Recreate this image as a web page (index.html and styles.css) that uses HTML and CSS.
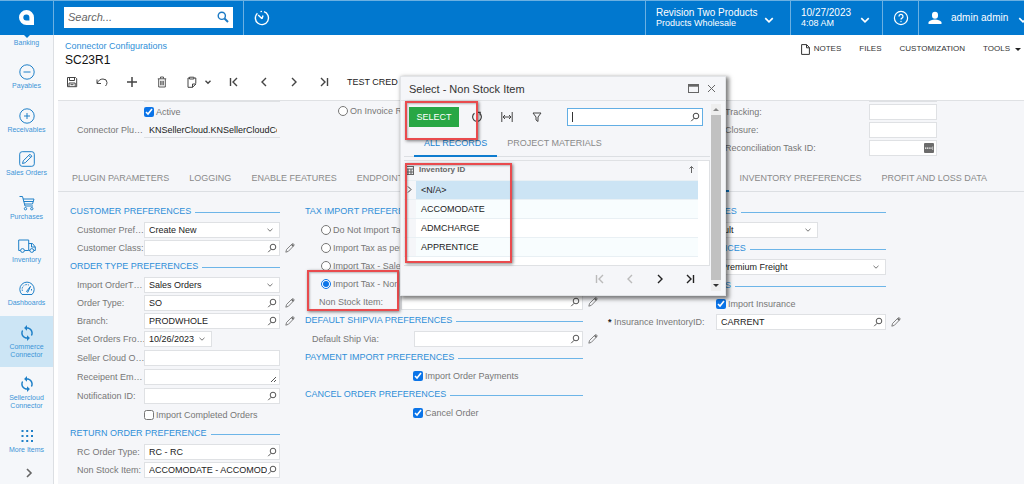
FILE: index.html
```html
<!DOCTYPE html>
<html lang="en">
<head>
<meta charset="utf-8">
<title>Connector Configurations - SC23R1</title>
<link rel="stylesheet" href="styles.css">
</head>
<body>
<svg class="defs" aria-hidden="true">
  <symbol id="lens" viewBox="0 0 10 10"><circle cx="6" cy="4" r="2.8"/><path d="M4.2 6.2 1.2 9.2"/></symbol>
  <symbol id="pencil" viewBox="0 0 10 10"><path d="M.8 9.2l.8-2.8L7 1q1-.7 1.7 0t0 1.8L3.4 8.3z" stroke-width=".8"/><path d="M6.8 1.600l1.600 1.600" stroke-width="1.500"/></symbol>
  <symbol id="down" viewBox="0 0 8 8"><path d="M1.5 2.8 4 5.2 6.5 2.8"/></symbol>
  <symbol id="prev" viewBox="0 0 12 12"><path d="M8 2 4 6l4 4"/></symbol>
  <symbol id="next" viewBox="0 0 12 12"><path d="M4 2l4 4-4 4"/></symbol>
  <symbol id="first" viewBox="0 0 12 12"><path d="M2.5 2v8M9 2 5 6l4 4"/></symbol>
  <symbol id="last" viewBox="0 0 12 12"><path d="M9.500 2v8M3 2l4 4-4 4"/></symbol>
  <symbol id="sync" viewBox="1 1 22 22"><path fill="currentColor" stroke="none" d="M12 4V1L8 5l4 4V6c3.310 0 6 2.690 6 6 0 1.010-.25 1.970-.7 2.800l1.460 1.460C19.540 15.030 20 13.570 20 12c0-4.420-3.580-8-8-8zm0 14c-3.310 0-6-2.690-6-6 0-1.010.25-1.970.7-2.800L5.240 7.740C4.460 8.970 4 10.430 4 12c0 4.420 3.580 8 8 8v3l4-4-4-4v3z"/></symbol>
</svg>
<div class="app">
  <header class="topbar">
    <div class="cell logo"><svg width="17" height="17" viewBox="0 0 17 17"><path d="M8.500 1A7.500 7.500 0 1 0 8.500 16H16V8.500A7.500 7.500 0 0 0 8.500 1z" fill="#fff"/><path d="M8.300 5.500a3 3 0 1 0 0 6H11.400V8.500a3 3 0 0 0-3.100-3z" fill="#0178cf"/></svg></div>
    <div class="cell search-cell">
      <div class="search"><input type="text" placeholder="Search..." aria-label="Search"><svg width="12" height="12" viewBox="0 0 12 12"><circle cx="4.800" cy="4.800" r="3.600"/><path d="M7.500 7.500 11 11" stroke-width="2"/></svg></div>
    </div>
    <button class="cell square" aria-label="Recent"><svg width="16" height="16" viewBox="0 0 16 16"><path d="M3.400 3.200A6.600 6.600 0 1 0 10 1.700M8 8.800 4.200 5M8 8.800l1-3.300M6.500 1.600 8 1.400M11.800 2.600l1 .9" stroke-width="1.400"/></svg></button>
    <div class="spacer"></div>
    <button class="cell company"><span class="stack"><span class="big">Revision Two Products</span><span>Products Wholesale</span></span><svg class="chev" width="12" height="12"><use href="#down"/></svg></button>
    <button class="cell date"><span class="stack"><span class="big">10/27/2023</span><span>4:08 AM</span></span><svg class="chev" width="12" height="12"><use href="#down"/></svg></button>
    <button class="cell square" aria-label="Help"><svg width="16" height="16" viewBox="0 0 16 16"><circle cx="8" cy="8" r="6.600"/><path d="M6 6.500a2 2 0 1 1 3 1.600Q8 8.600 8 9.600" stroke-width="1.300"/><circle cx="8" cy="11.500" r=".5" stroke-width=".6"/></svg></button>
    <button class="cell user"><svg width="14" height="14" viewBox="0 0 14 14"><path d="M7 .8a3 3 0 0 1 3 3v1a3 3 0 0 1-6 0v-1a3 3 0 0 1 3-3zM.5 13v-2Q2.500 8.500 7 8.500t6.500 2.500v2z" fill="#fff" stroke="none"/></svg><span class="big">admin admin</span><svg class="chev" width="12" height="12"><use href="#down"/></svg></button>
  </header>

  <div class="body">
    <nav class="side" aria-label="Modules">
      <a class="mod head" href="#"><i class="caret"></i><span>Banking</span></a>
      <a class="mod" href="#"><svg width="16" height="16" viewBox="0 0 16 16"><circle cx="8" cy="8" r="7.200"/><path d="M4.500 8h7"/></svg><span>Payables</span></a>
      <a class="mod" href="#"><svg width="16" height="16" viewBox="0 0 16 16"><circle cx="8" cy="8" r="7.200"/><path d="M5 8h6M8 5v6"/></svg><span>Receivables</span></a>
      <a class="mod" href="#"><svg width="16" height="16" viewBox="0 0 16 16"><rect x=".7" y=".7" width="14.600" height="14.600" rx="2.500"/><path d="M3.500 12.500l.8-2.700 6.600-6.600 2 2-6.600 6.500zM9.800 4.400l1.900 1.900"/></svg><span>Sales Orders</span></a>
      <a class="mod" href="#"><svg width="16" height="16" viewBox="0 0 16 16"><path d="M.5 1.500h3L6 11h8M4 4h11l-1.500 5H5.500M4.700 6.500h9.600"/><circle cx="6.500" cy="13.700" r="1.200"/><circle cx="12.800" cy="13.700" r="1.200"/></svg><span>Purchases</span></a>
      <a class="mod" href="#"><svg width="18" height="16" viewBox="0 0 18 16"><path d="M2.500 12.500H.7V2h10v10.500H6.500M10.700 5.500h3.800l2.800 3.500v3.500h-1.500M11 12.500h1M13.500 5.500V9h3.800"/><circle cx="4.500" cy="12.500" r="1.900"/><circle cx="13.800" cy="12.500" r="1.900"/></svg><span>Inventory</span></a>
      <a class="mod" href="#"><svg width="16" height="16" viewBox="0 0 16 16"><path d="M3 13.500A7.200 7.200 0 1 1 13 13.500zM7.500 10.500l4-5.200-2.700 6z"/><path d="M3.500 10A4.600 4.600 0 0 1 10 4.200M12.500 8v2.500" stroke-dasharray="1.500 1"/></svg><span>Dashboards</span></a>
      <a class="mod active" href="#"><svg width="16" height="16"><use href="#sync"/></svg><span>Commerce Connector</span></a>
      <a class="mod" href="#"><svg width="16" height="16"><use href="#sync"/></svg><span>Sellercloud Connector</span></a>
      <a class="mod" href="#"><svg width="16" height="16" viewBox="0 0 16 16"><path d="M2.500 3h2M7.200 3h2M12 3h2M2.500 8h2M7.200 8h2M12 8h2M2.500 13h2M7.200 13h2M12 13h2" stroke-width="2"/></svg><span>More Items</span></a>
      <button class="expand" aria-label="Expand"><svg width="12" height="12"><use href="#next"/></svg></button>
    </nav>

    <main class="main">
      <div class="title">
        <div><a class="crumb" href="#">Connector Configurations</a><h1>SC23R1</h1></div>
        <div class="links">
          <button class="notes"><svg width="9" height="11" viewBox="0 0 9 11"><path d="M.6.6h5L8.400 3.500v6.900H.6z"/><path d="M5.500.8v3h3"/></svg>NOTES</button>
          <button>FILES</button><button>CUSTOMIZATION</button><button class="tools">TOOLS<i class="tri"></i></button>
        </div>
      </div>
      <div class="toolbar">
        <button aria-label="Save"><svg width="12" height="12" viewBox="0 0 12 12"><path d="M1.500 1.500h8l1.200 1.200v8H1.500zM3.500 1.500v3h5v-3M3 10.500V7h6.200v3.500M4.500 8.700h3"/></svg></button>
        <button aria-label="Undo"><svg width="12" height="12" viewBox="0 0 12 12"><path d="M1 3.500v4h4M1.300 7.200Q3 3 7 3t4 3.500q0 2-1.500 3.500"/></svg></button>
        <button aria-label="Add"><svg width="12" height="12" viewBox="0 0 12 12"><path d="M6 1v10M1 6h10" stroke-width="1.500"/></svg></button>
        <button aria-label="Delete"><svg width="12" height="12" viewBox="0 0 12 12"><path d="M1.800 2.800h8.400M4.500 2.500V1h3v1.500M2.700 3v8h6.600V3M4.700 4.800v4.500M6 4.800v4.500M7.300 4.800v4.500" stroke-width=".9"/></svg></button>
        <button class="paste" aria-label="Clipboard"><svg width="12" height="12" viewBox="0 0 12 12"><path d="M6.500 11.300H2V2h1.500M8 2h1.800v5.500M3.500 3V1.200h4.300V3zM6.500 11.300V8H10z"/></svg><svg width="8" height="8"><use href="#down"/></svg></button>
        <button aria-label="First"><svg width="12" height="12"><use href="#first"/></svg></button>
        <button aria-label="Previous"><svg width="12" height="12"><use href="#prev"/></svg></button>
        <button aria-label="Next"><svg width="12" height="12"><use href="#next"/></svg></button>
        <button aria-label="Last"><svg width="12" height="12"><use href="#last"/></svg></button>
        <button class="text">TEST CRED</button>
      </div>

      <form class="form">
        <div class="summary">
          <div class="s1">
            <div class="box clipped"></div>
            <label class="row check"><input type="checkbox" checked>Active</label>
            <div class="row"><label for="plugin">Connector Plu…</label><input class="plain" id="plugin" value="KNSellerCloud.KNSellerCloudConnector"></div>
          </div>
          <div class="s2"><label class="row radio"><input type="radio" name="create">On Invoice R</label></div>
          <div class="s3">
            <div class="box clipped"></div>
            <div class="row"><label for="tr">Tracking:</label><div class="box"><input id="tr"></div></div>
            <div class="row"><label for="cl">Closure:</label><div class="box"><input id="cl"></div></div>
            <div class="row"><label for="rt">Reconciliation Task ID:</label><div class="box"><input id="rt"><svg class="keys" width="10" height="10" viewBox="0 0 10 10"><rect width="10" height="10" rx="1" fill="#6b6b6b" stroke="none"/><path d="M1 5.200h7" stroke="#fff" stroke-width="1.200" stroke-dasharray="1.200 .6"/><path d="M8.700 3.500v3.500" stroke="#ddd" stroke-width=".8"/></svg></div></div>
          </div>
        </div>
        <div class="tabs">
          <button type="button">PLUGIN PARAMETERS</button><button type="button">LOGGING</button><button type="button">ENABLE FEATURES</button><button type="button">ENDPOINT</button>
          <button type="button" class="on" aria-label="Preferences"></button><button type="button">INVENTORY PREFERENCES</button><button type="button">PROFIT AND LOSS DATA</button>
        </div>
        <div class="columns">
          <section class="c1">
            <h2>CUSTOMER PREFERENCES</h2>
            <div class="row"><label for="a1">Customer Pref…</label><div class="box"><select id="a1"><option>Create New</option></select><svg width="8" height="8"><use href="#down"/></svg></div></div>
            <div class="row"><label for="a2">Customer Class:</label><div class="box"><input id="a2"><svg width="10" height="10"><use href="#lens"/></svg></div><svg class="edit" width="10" height="10"><use href="#pencil"/></svg></div>
            <h2>ORDER TYPE PREFERENCES</h2>
            <div class="row"><label for="a3">Import OrderT…</label><div class="box"><select id="a3"><option>Sales Orders</option></select><svg width="8" height="8"><use href="#down"/></svg></div></div>
            <div class="row"><label for="a4">Order Type:</label><div class="box"><input id="a4" value="SO"><svg width="10" height="10"><use href="#lens"/></svg></div><svg class="edit" width="10" height="10"><use href="#pencil"/></svg></div>
            <div class="row"><label for="a5">Branch:</label><div class="box"><input id="a5" value="PRODWHOLE"><svg width="10" height="10"><use href="#lens"/></svg></div><svg class="edit" width="10" height="10"><use href="#pencil"/></svg></div>
            <div class="row"><label for="a6">Set Orders Fro…</label><div class="box short"><select id="a6"><option>10/26/2023</option></select><svg width="8" height="8"><use href="#down"/></svg></div></div>
            <div class="row tall"><label for="a7">Seller Cloud O…</label><div class="box"><input id="a7"></div></div>
            <div class="row tall"><label for="a8">Receipent Em…</label><div class="box"><textarea id="a8" rows="1"></textarea><svg class="grip" width="7" height="7" viewBox="0 0 7 7"><path d="M1 6 6 1M4 6l2-2"/></svg></div></div>
            <div class="row tall"><label for="a9">Notification ID:</label><div class="box"><input id="a9"><svg width="10" height="10"><use href="#lens"/></svg></div></div>
            <label class="row tall check"><input type="checkbox">Import Completed Orders</label>
            <h2>RETURN ORDER PREFERENCE</h2>
            <div class="row"><label for="a10">RC Order Type:</label><div class="box"><input id="a10" value="RC - RC"><svg width="10" height="10"><use href="#lens"/></svg></div></div>
            <div class="row"><label for="a11">Non Stock Item:</label><div class="box"><input id="a11" value="ACCOMODATE - ACCOMOD"><svg width="10" height="10"><use href="#lens"/></svg></div></div>
          </section>

          <section class="c2">
            <h2>TAX IMPORT PREFERE</h2>
            <label class="row radio"><input type="radio" name="tax">Do Not Import Ta</label>
            <label class="row radio"><input type="radio" name="tax">Import Tax as per</label>
            <label class="row radio"><input type="radio" name="tax">Import Tax - Sale</label>
            <label class="row radio"><input type="radio" name="tax" checked>Import Tax - Non</label>
            <div class="row sub"><label for="b1">Non Stock Item:</label><div class="box"><input id="b1"><svg width="10" height="10"><use href="#lens"/></svg></div><svg class="edit" width="10" height="10"><use href="#pencil"/></svg></div>
            <h2>DEFAULT SHIPVIA PREFERENCES</h2>
            <div class="row"><label for="b2">Default Ship Via:</label><div class="box"><input id="b2"><svg width="10" height="10"><use href="#lens"/></svg></div><svg class="edit" width="10" height="10"><use href="#pencil"/></svg></div>
            <h2>PAYMENT IMPORT PREFERENCES</h2>
            <label class="row check"><input type="checkbox" checked>Import Order Payments</label>
            <h2>CANCEL ORDER PREFERENCES</h2>
            <label class="row check"><input type="checkbox" checked>Cancel Order</label>
            <div class="mark mark-option"></div>
          </section>

          <section class="c3">
            <h2>WAREHOUSE PREFERENCES</h2>
            <div class="row wide"><label for="d1">Warehouse:</label><div class="box"><select id="d1"><option>Default</option></select><svg width="8" height="8"><use href="#down"/></svg></div></div>
            <h2>FREIGHT CODE PREFERENCES</h2>
            <div class="row"><label for="d2">Freight:</label><div class="box"><select id="d2"><option>Premium Freight</option></select><svg width="8" height="8"><use href="#down"/></svg></div></div>
            <h2>INSURANCE PREFERENCES</h2>
            <label class="row check"><input type="checkbox" checked>Import Insurance</label>
            <div class="row required"><label for="d3"><b>*</b> Insurance InventoryID:</label><div class="box"><input id="d3" value="CARRENT"><svg width="10" height="10"><use href="#lens"/></svg></div><svg class="edit" width="10" height="10"><use href="#pencil"/></svg></div>
          </section>
        </div>
      </form>
    </main>
  </div>

  <div class="dialog" role="dialog" aria-label="Select - Non Stock Item">
    <div class="dlg-title"><span>Select - Non Stock Item</span>
      <button aria-label="Maximize"><svg width="11" height="9" viewBox="0 0 11 9"><rect x=".5" y=".5" width="10" height="8"/><path d="M0 1.500h11" stroke-width="2.400"/></svg></button>
      <button aria-label="Close"><svg width="9" height="9" viewBox="0 0 9 9"><path d="M1 1l7 7M8 1 1 8"/></svg></button></div>
    <div class="dlg-body">
      <div class="dlg-main">
        <div class="dlg-tools">
          <button class="select-btn">SELECT</button>
          <button aria-label="Refresh"><svg width="12" height="12" viewBox="0 0 12 12"><path d="M3.500 2.300a4.400 4.400 0 1 0 5 0M6 1.300h3.200v3" stroke-width="1.200"/></svg></button>
          <button aria-label="Fit columns"><svg width="12" height="12" viewBox="0 0 12 12"><path d="M.8 1v10M11.200 1v10M2 6h8M4 4 2 6l2 2M8 4l2 2-2 2"/></svg></button>
          <button aria-label="Filter"><svg width="12" height="12" viewBox="0 0 12 12"><path d="M2 2h8L7 6v4.500L5 9V6z"/></svg></button>
          <div class="find"><i></i><input type="text" aria-label="Find"><svg width="10" height="10"><use href="#lens"/></svg></div>
        </div>
        <div class="tabs dlg-tabs"><button class="on">ALL RECORDS</button><button>PROJECT MATERIALS</button></div>
        <div class="grid">
          <table>
            <thead><tr><th class="hd"><svg width="9" height="9" viewBox="0 0 9 9"><path d="M.5.5h8v8h-8zM.5 3h8M.5 6h8M3 3v5M6 3v5"/></svg></th><th><span>Inventory ID</span><svg width="7" height="9" viewBox="0 0 7 9"><path d="M3.500 8V1.500M1.500 3.500l2-2 2 2"/></svg></th></tr></thead>
            <tbody>
              <tr class="sel"><td class="hd"><svg width="9" height="9" viewBox="0 0 12 12"><use href="#next"/></svg></td><td>&lt;N/A&gt;</td></tr>
              <tr><td class="hd"></td><td>ACCOMODATE</td></tr>
              <tr><td class="hd"></td><td>ADMCHARGE</td></tr>
              <tr><td class="hd"></td><td>APPRENTICE</td></tr>
            </tbody>
          </table>
        </div>
        <div class="pager">
          <button disabled aria-label="First page"><svg width="12" height="12"><use href="#first"/></svg></button>
          <button disabled aria-label="Previous page"><svg width="12" height="12"><use href="#prev"/></svg></button>
          <button aria-label="Next page"><svg width="12" height="12"><use href="#next"/></svg></button>
          <button aria-label="Last page"><svg width="12" height="12"><use href="#last"/></svg></button>
        </div>
      </div>
      <div class="scroll"><i class="up"></i><i class="thumb"></i><i class="dn"></i></div>
    </div>
    <div class="mark mark-select"></div>
    <div class="mark mark-list"></div>
  </div>
</div>
</body>
</html>
```
FILE: styles.css
```css
* { box-sizing: border-box; }
body { margin: 0; font: 9px/12px "Liberation Sans", Arial, sans-serif; color: #222; background: #fff; }
button, input, select, textarea { font: inherit; color: inherit; margin: 0; padding: 0; border: 0; background: none; border-radius: 0; outline: 0; }
button { white-space: nowrap; }
a { text-decoration: none; }
svg { fill: none; stroke: currentColor; stroke-width: 1; flex: none; display: block; }
h1, h2 { margin: 0; font-weight: 400; }
.defs { position: absolute; width: 0; height: 0; }
.app { position: relative; display: flex; flex-direction: column; min-height: 100vh; overflow: hidden; }

/* top bar */
.topbar { display: flex; height: 35px; background: #0178cf; border-top: 1px solid #6bb0e2; color: #fff; overflow: hidden; }
.cell { display: flex; align-items: center; flex: none; border-left: 1px solid #6bb0e2; }
.spacer { flex: 1; }
.logo { width: 53px; justify-content: center; border-left: 0; }
.logo svg { stroke: none; margin-bottom: 2px; }
.search-cell { width: 190px; padding: 0 10px; }
.search { display: flex; align-items: center; width: 100%; height: 21px; margin-bottom: 2px; padding: 0 4px; background: #fff; color: #1b79c4; }
.search input { flex: 1; min-width: 0; font-size: 11px; color: #555; }
.search input::placeholder { color: #666; font-style: italic; }
.search svg { stroke-width: 1.4; }
.square { width: 36px; justify-content: center; }
.square svg { stroke-width: 1.2; }
.company { width: 145px; padding-left: 10px; gap: 5px; }
.date { width: 92px; padding-left: 10px; gap: 8px; }
.user { width: 106px; padding-left: 9px; gap: 9px; }
.stack { display: flex; flex-direction: column; text-align: left; line-height: 11px; }
.big { font-size: 10px; }
.chev { stroke-width: 1.1; margin-top: 4px; }

/* side menu */
.body { display: flex; flex: 1; }
.side { display: flex; flex-direction: column; justify-content: space-between; width: 54px; flex: none; background: #f5f7fa; border-right: 1px solid #dcdfe3; }
.mod { display: flex; flex-direction: column; align-items: center; gap: 2px; padding: 9px 5px 8px; font-size: 7px; line-height: 8px; text-align: center; color: #3d95d8; }
.mod svg { color: #1f80c8; }
.head { height: 20px; padding: 0; gap: 1px; }
.caret { border: 3px solid transparent; border-top-color: #0178cf; border-bottom: 0; }
.active { background: #cce5f5; }
.expand { display: flex; justify-content: center; align-items: center; height: 22px; padding-left: 5px; color: #666; }
.expand svg { stroke-width: 1.6; }

/* page title and toolbar */
.main { display: flex; flex-direction: column; flex: 1; min-width: 0; }
.title { display: flex; justify-content: space-between; padding: 5px 3px 0 11px; }
.crumb { display: block; color: #2f8fd8; }
h1 { font-size: 12px; line-height: 16px; color: #111; }
.links { display: flex; align-items: flex-start; gap: 18px; padding-top: 3px; font-size: 8px; line-height: 12px; color: #333; }
.notes, .tools { display: flex; align-items: center; gap: 4px; }
.tools { gap: 5px; }
.tri { border: 3px solid transparent; border-top-color: #222; border-bottom: 0; }
.toolbar { display: flex; height: 28px; margin: 0 0 4px 3px; }
.toolbar button { display: flex; align-items: center; justify-content: center; width: 30px; color: #444; }
.toolbar .paste { width: 42px; justify-content: flex-start; gap: 6px; padding-left: 9px; }
.toolbar .text { width: auto; padding-left: 8px; color: #222; }
.toolbar use { stroke-width: 1.4; }

/* form */
.form { flex: 1; margin-left: 4px; background: #f5f6f9; border-top: 1px solid #dfe1e4; }
.row { display: flex; align-items: center; height: 18px; padding-right: 15px; color: #777; white-space: nowrap; }
.tall { height: 19px; }
.row label { flex: none; }
.box { display: flex; align-items: center; position: relative; flex: 1; min-width: 0; height: 16px; padding: 0 2px 0 4px; background: #fff; border: 1px solid #dfe1e4; color: #222; }
.box input, .box select, .box textarea { flex: 1; min-width: 0; width: 100%; height: 14px; line-height: 14px; appearance: none; resize: none; overflow: hidden; }
.box > svg { color: #555; }
.box select + svg { margin-right: 3px; color: #777; }
.box .grip { align-self: flex-end; margin-bottom: 1px; }
.edit { margin: 0 -15px 0 5px; color: #666; }
.row input[type=checkbox], .row input[type=radio] { width: 10px; height: 10px; margin-right: 2px; flex: none; accent-color: #0b74e8; }
.short { flex: none; width: 68px; }
.clipped { margin-top: -15px; flex: none; }

.summary { display: flex; height: 65px; overflow: hidden; padding-left: 12px; }
.s1 { width: 225px; flex: none; }
.s1 .clipped { margin-left: 74px; margin-right: 15px; margin-bottom: 1px; }
.plain { flex: 1; min-width: 0; height: 16px; padding: 0 3px 0 5px; color: #222; border-bottom: 1px solid #dfe1e4; }
.s2 { width: 430px; flex: none; padding: 1px 0 0 43px; }
.s2 .row { padding: 0; }
.s3 { width: 212px; flex: none; }
.s3 .clipped { width: 68px; margin-left: 144px; margin-bottom: 1px; }
.s3 .row { padding: 0; }
.s3 .row label { width: 144px; }

.tabs { display: flex; height: 26px; border-bottom: 1px solid #dcdfe3; padding: 0 27px 0 4px; color: #8a8a8a; }
.tabs button { height: 26px; padding: 0 10px; flex: none; border-bottom: 2px solid transparent; }
.tabs .on { border-bottom-color: #0e7ccf; color: #1b83d2; }
.form .tabs .on { width: 84px; margin-left: auto; }

.columns { display: flex; gap: 10px; padding: 10px 0 4px 12px; }
section { position: relative; flex: none; }
.c1 { width: 225px; }
.c2, .c3 { width: 293px; }
h2 { display: flex; align-items: center; gap: 4px; height: 18px; margin: 0 15px 1px 0; font-size: 9px; color: #2f8fd8; white-space: nowrap; }
h2::after { content: ""; flex: 1; height: 1px; margin-top: 3px; background: #6db5e8; }
.c1 .row label, .s1 .row label { width: 74px; padding-left: 7px; }
.c1 .check, .s1 .check { padding-left: 74px; }
.c2 .row label { width: 109px; padding-left: 7px; }
.c2 .sub label { width: 96px; padding-left: 14px; }
.c2 .radio { padding-left: 16px; }
.c2 .check { padding-left: 108px; }
.c3 .row label { width: 108px; padding-left: 7px; }
.c3 .check { padding-left: 108px; }
.c3 .wide label { width: 92px; }
.c3 .wide .box { flex: none; width: 118px; }
.c3 .required label { padding-left: 0; }
.required b { color: #222; }

/* lookup dialog */
.dialog { position: absolute; left: 400px; top: 76px; width: 326px; background: #f5f6f9; border: 1px solid #e2e4e7; box-shadow: 2px 2px 4px 1px rgba(0, 0, 0, .5); }
.dlg-title { display: flex; align-items: center; gap: 8px; height: 24px; padding: 0 9px 0 8px; border-bottom: 1px solid #e2e4e7; font-size: 11px; color: #333; }
.dlg-title span { flex: 1; }
.dlg-title button { color: #666; }
.dlg-body { display: flex; padding: 3px 4px 4px 3px; }
.dlg-main { flex: 1; min-width: 0; }
.dlg-tools { display: flex; align-items: center; height: 26px; padding: 0 7px 0 5px; color: #444; }
.dlg-tools button { display: flex; align-items: center; justify-content: center; width: 30px; height: 20px; }
.dlg-tools .select-btn { width: 50px; margin-right: 3px; background: #28a745; color: #fff; }
.find { display: flex; align-items: center; width: 136px; height: 18px; margin-left: auto; padding: 0 2px 0 4px; background: #fff; border: 1px solid #62aee4; }
.find i { width: 1px; height: 10px; background: #333; }
.find input { flex: 1; min-width: 0; }
.dlg-tabs { padding: 0 0 0 10px; height: 27px; align-items: flex-end; }
.dlg-tabs button { height: 26px; margin-bottom: -1px; }
.grid { height: 106px; margin-top: 3px; background: #fff; border: 1px solid #dfe1e4; border-left: 0; padding-right: 11px; }
table { width: 100%; border-collapse: collapse; }
th, td { height: 19px; padding: 0 5px; text-align: left; border-bottom: 1px solid #e9f0f4; color: #222; }
th { background: #f5f6f9; font-size: 8px; color: #666; padding: 0 3px; }
th svg { float: right; margin-top: 1px; }
.hd { width: 12px; padding: 0 1px; background: #f5f6f9; }
.hd svg { float: none; margin: 0; stroke-width: 1.200; }
tbody tr:nth-child(even) td:last-child { background: #f8fdfe; }
tbody .sel td:last-child { background: #cce4f4; }
.pager { display: flex; justify-content: flex-end; align-items: center; height: 25px; padding-right: 14px; gap: 18px; color: #222; }
.pager button:disabled { color: #bbb; }
.pager svg { stroke-width: 1.400; }
.scroll { display: flex; flex-direction: column; align-items: center; width: 10px; margin-left: 1px; background: #eee; }
.up { border: 3px solid transparent; border-bottom-color: #888; border-top: 0; margin: 4px 0; }
.dn { border: 3px solid transparent; border-top-color: #333; border-bottom: 0; margin: 4px 0; }
.thumb { flex: 1; width: 10px; background: #c1c1c1; }

/* highlight frames laid over the page */
.mark { position: absolute; border: 2px solid #e94b4e; box-shadow: 1px 1px 3px rgba(0, 0, 0, .5), inset 1px 1px 2px rgba(0, 0, 0, .25); pointer-events: none; }
.mark-select { left: 4px; top: 24px; width: 73px; height: 39px; }
.mark-list { left: 4px; top: 86px; width: 107px; height: 100px; }
.mark-option { left: 2px; top: 68px; width: 92px; height: 41px; }
```
